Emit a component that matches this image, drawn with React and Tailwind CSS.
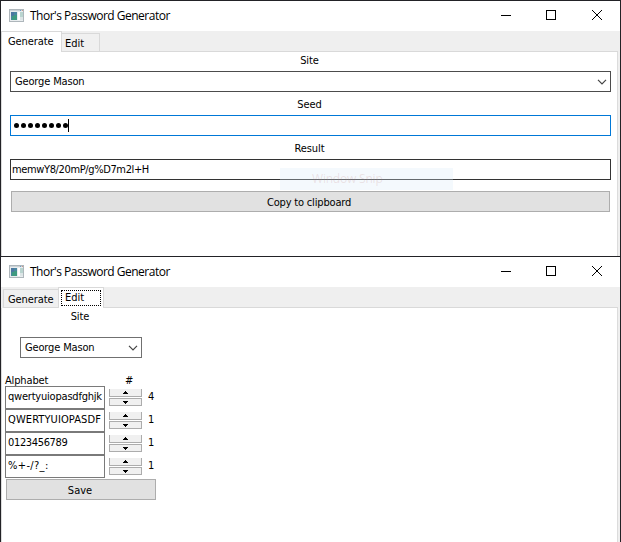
import React from 'react';

const ui = 'font-["DejaVu_Sans_Condensed","DejaVu_Sans",sans-serif] [font-stretch:condensed] text-[11px] leading-[14px] whitespace-nowrap text-black';

function AppIcon() {
  return (
    <svg width="16" height="14" viewBox="0 0 16 14" className="ml-2 shrink-0" shapeRendering="crispEdges">
      <rect x="0.5" y="0.5" width="14" height="12" fill="#e9edef" stroke="#aeb6bb" />
      <rect x="1" y="1" width="13" height="1" fill="#cbd2d6" />
      <rect x="11" y="1" width="1" height="1" fill="#6d9bc4" />
      <rect x="13" y="1" width="1" height="1" fill="#c8978a" />
      <rect x="2" y="3" width="6" height="8" fill="#4a86a0" />
      <rect x="3" y="6" width="5" height="5" fill="#3f9a80" />
      <rect x="2" y="3" width="3" height="4" fill="#4c78a0" />
      <rect x="9" y="3" width="2" height="8" fill="#ffffff" />
      <rect x="11" y="3" width="3" height="5" fill="#b9d4cf" />
      <rect x="11" y="8" width="3" height="3" fill="#dce5e6" />
    </svg>
  );
}

function TitleBar() {
  return (
    <div className="flex h-[30px] shrink-0 items-center bg-white">
      <AppIcon />
      <span className='ml-[5px] flex-1 font-["Open_Sans","Noto_Sans",sans-serif] text-[12px] leading-[16px] tracking-[-0.5px] whitespace-nowrap text-black'>
        Thor's Password Generator
      </span>
      <svg width="119" height="30" viewBox="0 0 119 30" className="shrink-0" fill="none" stroke="#000">
        <path d="M0 14.5h10" shapeRendering="crispEdges" />
        <rect x="45.5" y="9.5" width="9" height="9" shapeRendering="crispEdges" />
        <path d="M91 9l10 10M101 9l-10 10" />
      </svg>
    </div>
  );
}

function Chevron() {
  return (
    <svg width="10" height="6" viewBox="0 0 10 6" className="mr-[3px] shrink-0" fill="none" stroke="#444" strokeWidth="1.2">
      <path d="M1 0.8L5 4.8L9 0.8" />
    </svg>
  );
}

function Spinner() {
  return (
    <div className="flex h-[17px] w-[33px] flex-col gap-px">
      <div className="flex h-2 items-center justify-center border border-t-0 border-[#acacac] bg-[#f0f0f0]">
        <svg width="5" height="3" viewBox="0 0 5 3" shapeRendering="crispEdges"><path d="M2 0h1v1h1v1h1v1H0V2h1V1h1z" /></svg>
      </div>
      <div className="flex h-2 items-center justify-center border border-[#acacac] bg-[#f0f0f0]">
        <svg width="5" height="3" viewBox="0 0 5 3" shapeRendering="crispEdges"><path d="M0 0h5v1H4v1H3v1H2V2H1V1H0z" /></svg>
      </div>
    </div>
  );
}

const rows = [
  { text: 'qwertyuiopasdfghjk', count: 4, track: 'tracking-[-0.21px]' },
  { text: 'QWERTYUIOPASDF', count: 1, track: 'tracking-[0.1px]' },
  { text: '0123456789', count: 1, track: 'tracking-[-0.35px]' },
  { text: '%+-/?_:', count: 1, track: 'tracking-[0.35px]' },
];

function GenerateWindow() {
  return (
    <section className="flex h-[256px] flex-col border-x border-t border-[#222226] bg-white">
      <TitleBar />
      <div className="flex h-[21px] shrink-0 bg-[#efefef]">
        <div className="h-[21px] w-[61px] border-x border-t border-[#d9d9d9] bg-white pt-[3px] pl-[6px]">
          <span className={`${ui} block tracking-[-0.1px]`}>Generate</span>
        </div>
        <div className="mt-[2px] h-[19px] w-[38px] border-y border-r border-[#d9d9d9] bg-[#f0f0f0] pt-[3px] pl-[3px]">
          <span className={`${ui} block`}>Edit</span>
        </div>
        <div className="mr-[2px] flex-1 border-b border-[#d9d9d9]" />
      </div>
      <div className="flex flex-1 bg-[#efefef] pr-[2px]">
        <div className="flex flex-1 flex-col border-x border-[#dcdcdc] bg-white pr-[6px] pl-[8px]">
          <div className={`${ui} mt-[2px] h-[17px] pr-[2px] text-center tracking-[-0.1px]`}>Site</div>
          <div className="flex h-[21px] items-center border border-[#4c4c4c] pl-1">
            <span className={`${ui} flex-1 tracking-[-0.15px]`}>George Mason</span>
            <Chevron />
          </div>
          <div className={`${ui} mt-[6px] h-[17px] pr-[2px] text-center tracking-[-0.1px]`}>Seed</div>
          <div className="flex h-[21px] items-center border border-[#0078d7] pl-[3px]">
            <div className="flex gap-[2px]">
              {Array.from({ length: 8 }, (_, i) => (
                <span key={i} className="size-[5px] rounded-full bg-black" />
              ))}
            </div>
            <span className="mb-px h-[13px] w-px bg-black" />
          </div>
          <div className={`${ui} mt-[6px] h-[17px] pr-[2px] text-center tracking-[-0.1px]`}>Result</div>
          <div className="relative flex h-[21px] items-center border border-[#333333] pl-[1px]">
            <span className={`${ui} tracking-[-0.37px]`}>memwY8/20mP/g%D7m2l+H</span>
            <div className="absolute top-[8px] left-[269px] flex h-[22px] w-[173px] items-center bg-[#dcecfa]/30 pl-[32px]">
              <span className='font-["Open_Sans",sans-serif] text-[12px] leading-[16px] tracking-[-0.2px] text-[#c08080]/20 whitespace-nowrap'>Window Snip</span>
            </div>
          </div>
          <button className={`${ui} mt-[11px] ml-[1px] mr-[1px] h-[21px] border border-[#adadad] bg-[#e1e1e1] pt-[2px] pr-[3px] tracking-[-0.17px]`}>
            Copy to clipboard
          </button>
        </div>
      </div>
    </section>
  );
}

function EditWindow() {
  return (
    <section className="flex h-[286px] flex-col border-x border-t border-[#222226] bg-white">
      <TitleBar />
      <div className="flex h-[21px] shrink-0 bg-[#efefef] pl-[2px]">
        <div className="mt-[2px] h-[19px] w-[55px] border-y border-l border-[#d9d9d9] bg-[#f0f0f0] pt-[3px] pl-[4px]">
          <span className={`${ui} block tracking-[-0.1px]`}>Generate</span>
        </div>
        <div className="h-[21px] w-[46px] border-x border-t border-[#d9d9d9] bg-white px-[2px] pt-[2px]">
          <div className="h-[16px] w-[40px] border border-dotted border-black pl-[3px]">
            <span className={`${ui} block`}>Edit</span>
          </div>
        </div>
        <div className="mr-[2px] flex-1 border-b border-[#d9d9d9]" />
      </div>
      <div className="flex flex-1 bg-[#efefef] pr-[2px]">
        <div className="flex flex-1 flex-col items-start border-x border-[#dcdcdc] bg-white pl-[3px]">
          <div className={`${ui} mt-[2px] h-[27px] w-[150px] text-center tracking-[-0.1px]`}>Site</div>
          <div className="ml-[15px] flex h-[21px] w-[122px] items-center border border-[#707070] pl-1">
            <span className={`${ui} flex-1 tracking-[-0.15px]`}>George Mason</span>
            <Chevron />
          </div>
          <div className="mt-[16px] flex h-[12px]">
            <span className={`${ui} w-[120px] tracking-[-0.15px]`}>Alphabet</span>
            <span className={ui}>#</span>
          </div>
          {rows.map((r) => (
            <div key={r.text} className="flex h-[23px] items-center">
              <div className="flex h-[23px] w-[100px] items-center overflow-hidden border border-[#7a7a7a] pr-px pl-[2px]">
                <div className="mb-px w-full overflow-hidden">
                  <span className={`${ui} ${r.track} block`}>{r.text}</span>
                </div>
              </div>
              <div className="ml-1"><Spinner /></div>
              <span className={`${ui} mb-px ml-[6px]`}>{r.count}</span>
            </div>
          ))}
          <button className={`${ui} mt-[1px] ml-px h-[21px] w-[150px] border border-[#adadad] bg-[#e1e1e1] pt-[2px] pr-[2px]`}>Save</button>
        </div>
      </div>
    </section>
  );
}

export default function App() {
  return (
    <main className="h-[542px] w-[621px] overflow-hidden">
      <GenerateWindow />
      <EditWindow />
    </main>
  );
}
